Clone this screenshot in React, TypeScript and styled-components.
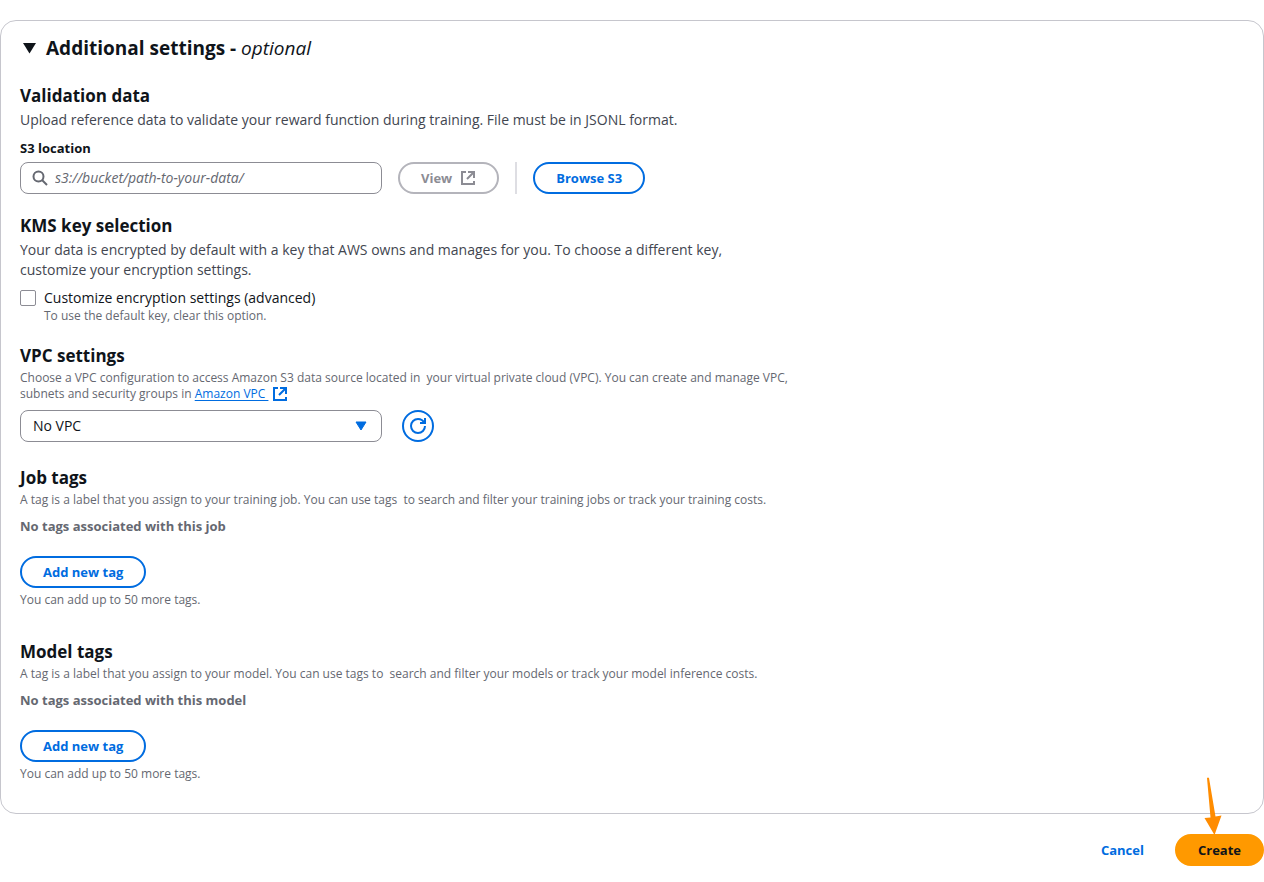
import React, { useId, useState } from "react";
import styled, { createGlobalStyle, css } from "styled-components";

const color = {
  heading: "#0f141a",
  body: "#424650",
  hint: "#656871",
  line: "#c6c6cd",
  field: "#8c8c94",
  disabled: "#b4b4bb",
  disabledText: "#8c8c94",
  link: "#006ce0",
  primary: "#ff9900",
};

const GlobalStyle = createGlobalStyle`
  *, *::before, *::after { box-sizing: border-box; }
  body {
    margin: 0;
    background: #ffffff;
    color: ${color.heading};
    font-family: "Open Sans", "Noto Sans", sans-serif;
    font-size: 14px;
    line-height: 20px;
  }
  h2, h3, p { margin: 0; }
  button, input, select { font: inherit; color: inherit; }
`;

const Page = styled.main`
  padding: 20px 0 16px;
`;

const Panel = styled.section`
  padding: 16px 19px 31px;
  border: 1px solid ${color.line};
  border-radius: 16px;
`;

const PanelToggle = styled.button`
  display: flex;
  align-items: center;
  gap: 8px;
  padding: 0 0 0 2px;
  border: 0;
  background: none;
  cursor: pointer;
`;

const PanelTitle = styled.h2`
  font-size: 19px;
  line-height: 22px;
  font-weight: 700;

  em { font-weight: 400; }
`;

const Sections = styled.div`
  margin-top: 26px;
`;

const Section = styled.section<{ $gap?: number }>`
  margin-top: ${(p) => p.$gap ?? 0}px;
`;

const SectionTitle = styled.h3`
  margin-bottom: 3px;
  font-size: 17px;
  line-height: 22px;
  font-weight: 700;
`;

const Description = styled.p`
  max-width: 720px;
  color: ${color.body};
`;

const Hint = styled.p`
  max-width: 790px;
  color: ${color.hint};
  font-size: 12px;
  line-height: 16px;
  white-space: pre-wrap;
`;

const FieldLabel = styled.label`
  display: block;
  margin: 8px 0 4px;
  font-size: 13px;
  font-weight: 700;
`;

const ControlRow = styled.div<{ $gap: number }>`
  display: flex;
  align-items: center;
  gap: ${(p) => p.$gap}px;
`;

const fieldBox = css`
  width: 362px;
  height: 32px;
  border: 1px solid ${color.field};
  border-radius: 8px;
  background: #ffffff;
`;

const SearchField = styled.div`
  ${fieldBox}
  display: flex;
  align-items: center;
  gap: 7px;
  padding: 0 11px;
`;

const SearchInput = styled.input`
  flex: 1;
  min-width: 0;
  padding: 0;
  border: 0;
  outline: 0;
  background: none;

  &::placeholder {
    color: ${color.hint};
    font-style: italic;
    opacity: 1;
  }
`;

const Divider = styled.span`
  width: 2px;
  height: 32px;
  background: #dedee3;
`;

const Button = styled.button<{ $kind?: "normal" | "link" | "primary" }>`
  display: inline-flex;
  align-items: center;
  justify-content: center;
  gap: 8px;
  height: 32px;
  padding: 0 21px;
  border: 2px solid ${color.link};
  border-radius: 20px;
  background: #ffffff;
  color: ${color.link};
  font-size: 13px;
  font-weight: 700;
  white-space: nowrap;
  cursor: pointer;

  &:disabled {
    border-color: ${color.disabled};
    color: ${color.disabledText};
    cursor: default;
  }

  ${(p) => p.$kind === "link" && css`border-color: transparent;`}
  ${(p) =>
    p.$kind === "primary" &&
    css`
      border-color: ${color.primary};
      background: ${color.primary};
      color: ${color.heading};
    `}
`;

const IconButton = styled(Button)`
  width: 32px;
  padding: 0;
`;

const CheckRow = styled.div`
  display: grid;
  grid-template-columns: 16px auto;
  column-gap: 8px;
  align-items: center;
  justify-content: start;
  margin-top: 8px;
`;

const CheckHint = styled(Hint)`
  grid-column: 2;
`;

const Checkbox = styled.input`
  appearance: none;
  width: 16px;
  height: 16px;
  margin: 0;
  border: 1px solid ${color.field};
  border-radius: 2px;
  background: #ffffff;

  &:checked {
    border-color: ${color.link};
    background: ${color.link};
  }
`;

const SelectBox = styled.div`
  position: relative;

  svg {
    position: absolute;
    top: 8px;
    right: 13px;
    color: ${color.link};
    pointer-events: none;
  }
`;

const Select = styled.select`
  ${fieldBox}
  display: block;
  appearance: none;
  padding: 0 40px 0 12px;
`;

const VpcControls = styled(ControlRow)`
  margin-top: 8px;
`;

const Link = styled.a`
  color: ${color.link};
  text-underline-offset: 2px;

  svg { margin: -4px 0 -4px 4px; vertical-align: 0; }
`;

const EmptyTags = styled.p`
  margin: 8px 0 20px;
  color: ${color.hint};
  font-size: 13px;
  font-weight: 700;
`;

const TagLimit = styled(Hint)`
  margin-top: 4px;
`;

const Actions = styled.footer`
  display: flex;
  justify-content: flex-end;
  gap: 8px;
  margin-top: 20px;
`;

const CreateSpot = styled.div`
  position: relative;
  display: flex;
`;

const Pointer = styled.svg`
  position: absolute;
  right: 42px;
  bottom: 31px;
  pointer-events: none;
`;

const Caret = () => (
  <svg width="16" height="16" viewBox="0 0 16 16" aria-hidden="true">
    <path d="M3 4h10L8 12z" fill="currentColor" stroke="currentColor" strokeWidth="1" strokeLinejoin="round" />
  </svg>
);

const TitleCaret = () => (
  <svg width="16" height="16" viewBox="0 0 16 16" aria-hidden="true">
    <path d="M1 3h13L7.500 13.500z" fill="currentColor" />
  </svg>
);

const SearchIcon = () => (
  <svg width="16" height="16" viewBox="0 0 16 16" fill="none" stroke={color.hint} strokeWidth="2" aria-hidden="true">
    <circle cx="6.500" cy="6.500" r="5" />
    <path d="m15 15-5-5" />
  </svg>
);

const ExternalIcon = () => (
  <svg width="16" height="16" viewBox="0 0 16 16" fill="none" stroke="currentColor" strokeWidth="2" aria-hidden="true">
    <path d="M14 8V2H8M14 2 7 9" />
    <path d="M6 2H2v12h12v-3" />
  </svg>
);

const RefreshIcon = () => (
  <svg width="16" height="16" viewBox="0 0 16 16" fill="none" stroke="currentColor" strokeWidth="2" aria-hidden="true">
    <path d="M15 8c0 3.87-3.13 7-7 7s-7-3.13-7-7 3.13-7 7-7c2.79 0 5.2 1.63 6.33 4" />
    <path d="M10 5h5V0" />
  </svg>
);

function TagSection({ title, hint, empty, gap }: { title: string; hint: string; empty: string; gap: number }) {
  return (
    <Section $gap={gap}>
      <SectionTitle>{title}</SectionTitle>
      <Hint>{hint}</Hint>
      <EmptyTags>{empty}</EmptyTags>
      <Button type="button">Add new tag</Button>
      <TagLimit>You can add up to 50 more tags.</TagLimit>
    </Section>
  );
}

export default function App() {
  const id = useId();
  const [open, setOpen] = useState(true);

  return (
    <Page>
      <GlobalStyle />
      <Panel>
        <PanelToggle type="button" aria-expanded={open} onClick={() => setOpen(!open)}>
          <TitleCaret />
          <PanelTitle>
            Additional settings - <em>optional</em>
          </PanelTitle>
        </PanelToggle>
        {open && (
          <Sections>
            <Section>
              <SectionTitle>Validation data</SectionTitle>
              <Description>
                Upload reference data to validate your reward function during training. File must be in JSONL format.
              </Description>
              <FieldLabel htmlFor={`${id}-s3`}>S3 location</FieldLabel>
              <ControlRow $gap={16}>
                <SearchField>
                  <SearchIcon />
                  <SearchInput id={`${id}-s3`} type="text" placeholder="s3://bucket/path-to-your-data/" />
                </SearchField>
                <Button type="button" disabled>
                  View
                  <ExternalIcon />
                </Button>
                <Divider />
                <Button type="button">Browse S3</Button>
              </ControlRow>
            </Section>

            <Section $gap={21}>
              <SectionTitle>KMS key selection</SectionTitle>
              <Description>
                Your data is encrypted by default with a key that AWS owns and manages for you. To choose a different
                key, customize your encryption settings.
              </Description>
              <CheckRow>
                <Checkbox id={`${id}-kms`} type="checkbox" aria-describedby={`${id}-kms-hint`} />
                <label htmlFor={`${id}-kms`}>Customize encryption settings (advanced)</label>
                <CheckHint id={`${id}-kms-hint`}>To use the default key, clear this option.</CheckHint>
              </CheckRow>
            </Section>

            <Section $gap={21}>
              <SectionTitle id={`${id}-vpc`}>VPC settings</SectionTitle>
              <Hint>
                {"Choose a VPC configuration to access Amazon S3 data source located in  your virtual private cloud (VPC). You can create and manage VPC, subnets and security groups in "}
                <Link href="#vpc">
                  {"Amazon VPC "}
                  <ExternalIcon />
                </Link>
              </Hint>
              <VpcControls $gap={20}>
                <SelectBox>
                  <Select aria-labelledby={`${id}-vpc`}>
                    <option>No VPC</option>
                  </Select>
                  <Caret />
                </SelectBox>
                <IconButton type="button" aria-label="Refresh VPC list">
                  <RefreshIcon />
                </IconButton>
              </VpcControls>
            </Section>

            <TagSection
              gap={25}
              title="Job tags"
              hint="A tag is a label that you assign to your training job. You can use tags  to search and filter your training jobs or track your training costs."
              empty="No tags associated with this job"
            />
            <TagSection
              gap={33}
              title="Model tags"
              hint="A tag is a label that you assign to your model. You can use tags to  search and filter your models or track your model inference costs."
              empty="No tags associated with this model"
            />
          </Sections>
        )}
      </Panel>
      <Actions>
        <Button type="button" $kind="link">
          Cancel
        </Button>
        <CreateSpot>
          <Button type="button" $kind="primary">
            Create
          </Button>
          <Pointer width="18" height="58" viewBox="0 0 18 58" aria-hidden="true">
            <path d="M3 1Q4 0 5 1L11.500 39.500 17.500 38.500 10.500 58 .5 41 6.500 40.500z" fill="#ff8c00" />
          </Pointer>
        </CreateSpot>
      </Actions>
    </Page>
  );
}
